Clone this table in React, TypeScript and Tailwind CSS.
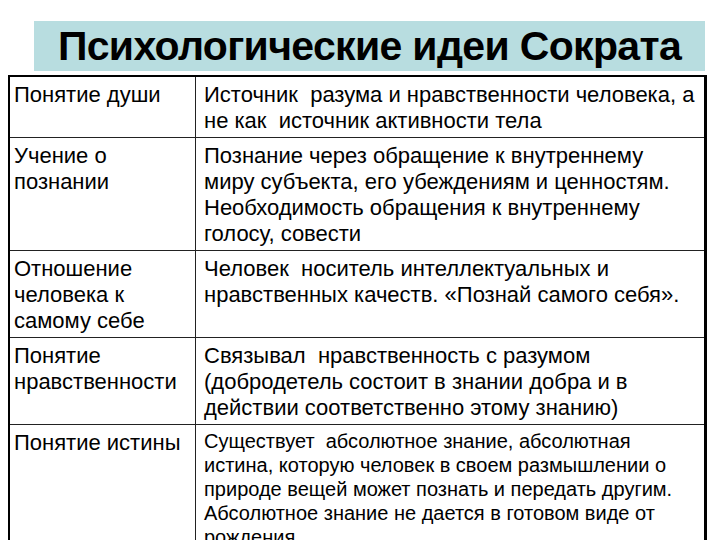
const rows: { term: string; text: string; small?: boolean }[] = [
  {
    term: 'Понятие души',
    text: 'Источник  разума и нравственности человека, а\nне как  источник активности тела',
  },
  {
    term: 'Учение о\nпознании',
    text: 'Познание через обращение к внутреннему\nмиру субъекта, его убеждениям и ценностям.\nНеобходимость обращения к внутреннему\nголосу, совести',
  },
  {
    term: 'Отношение\nчеловека к\nсамому себе',
    text: 'Человек  носитель интеллектуальных и\nнравственных качеств. «Познай самого себя».',
  },
  {
    term: 'Понятие\nнравственности',
    text: 'Связывал  нравственность с разумом\n(добродетель состоит в знании добра и в\nдействии соответственно этому знанию)',
  },
  {
    term: 'Понятие истины',
    text: 'Существует  абсолютное знание, абсолютная\nистина, которую человек в своем размышлении о\nприроде вещей может познать и передать другим.\nАбсолютное знание не дается в готовом виде от\nрождения',
    small: true,
  },
];

export default function App() {
  return (
    <div
      className="w-[720px] h-[540px] overflow-hidden bg-white text-black"
      style={{ fontFamily: '"Liberation Sans", Arial, sans-serif' }}
    >
      <div className="pt-[21px] pl-[34px] pr-[15px]">
        <div className="h-[50px] bg-[#b8dde0] flex items-center justify-center">
          <h1 className="text-[41px] font-bold leading-none tracking-[-0.65px] whitespace-nowrap">
            Психологические идеи Сократа
          </h1>
        </div>
      </div>

      <div className="mt-[4px] ml-[8px] w-[699px] border-t-2 border-l-2 border-r-[3px] border-black">
        {rows.map((row, i) => (
          <div
            key={i}
            className={`flex ${i > 0 ? 'border-t border-[#222]' : ''}`}
          >
            <div className="w-[186px] shrink-0 border-r border-[#222] pl-[4px] pt-[5px] pb-[3px] text-[22px] leading-[26px] whitespace-pre">
              {row.term}
            </div>
            <div
              className={`flex-1 pl-[8px] whitespace-pre ${
                row.small
                  ? 'pt-[4px] text-[20px] leading-[24px]'
                  : 'pt-[5px] pb-[3px] text-[22px] leading-[26px]'
              }`}
            >
              {row.text}
            </div>
          </div>
        ))}
      </div>
    </div>
  );
}
